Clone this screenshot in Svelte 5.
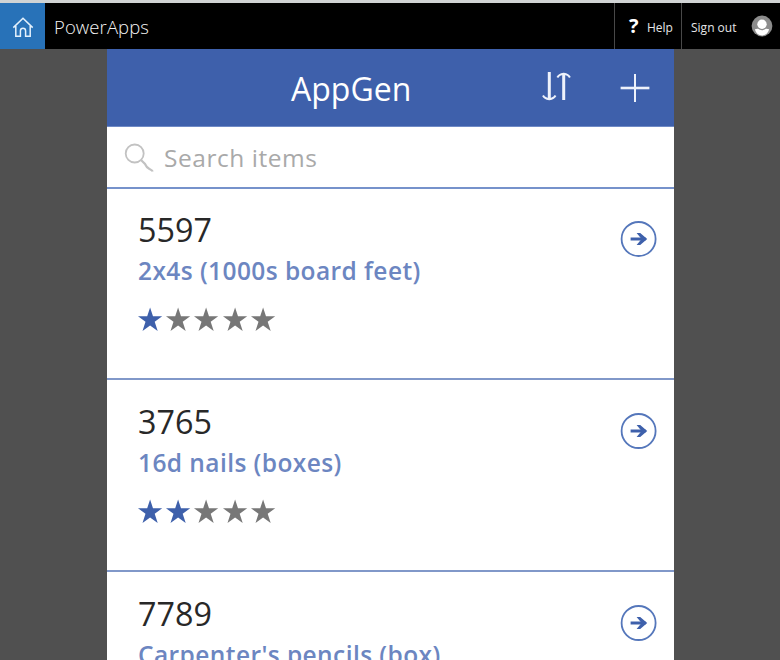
<script>
  const items = [
    { id: '5597', name: '2x4s (1000s board feet)', rating: 1 },
    { id: '3765', name: '16d nails (boxes)', rating: 2 },
    { id: '7789', name: "Carpenter's pencils (box)", rating: 3 }
  ];
  const stars = [1, 2, 3, 4, 5];
</script>

<div class="app">
  <div class="strip"></div>
  <nav>
    <div class="home">
      <svg width="22" height="22" viewBox="0 0 22 22" fill="none" stroke="#e4f1fc" stroke-width="1.5">
        <path d="M1.3 11.6 11 2.2l9.7 9.4M3.8 9.9v10.3h4.6v-5.4a2.6 2.6 0 0 1 5.2 0v5.4h4.6V9.9" />
      </svg>
    </div>
    <span class="brand">PowerApps</span>
    <div class="help"><b>?</b><span>Help</span></div>
    <div class="account">
      <span>Sign out</span>
      <svg width="22" height="22" viewBox="0 0 22 22">
        <circle cx="11" cy="11" r="10.4" fill="#8c8c8c" />
        <circle cx="11" cy="9.2" r="4.7" fill="#fff" />
        <path d="M3.9 14.3c1.2-.5 2.3-.7 3.2-.5 2.3 1.9 5.5 1.9 7.8 0 .9-.2 2 0 3.2.5C17 18.7 14.3 20.4 11 20.4S5 18.7 3.9 14.3z" fill="#fff" />
      </svg>
    </div>
  </nav>

  <main>
    <header>
      <h1>AppGen</h1>
      <svg class="sort" width="30" height="32" viewBox="0 0 30 32" fill="none" stroke="#eef2fb">
        <path d="M8.300 1v27M22.700 29V3.500" stroke-width="3" />
        <path d="M2 24.500q1.500 3 6.300 3.700 4.700-.7 6.200-3.700M16.400 6.500q1.500-3 6.300-3.700 4.700.7 6.200 3.700" stroke-width="2" />
      </svg>
      <svg class="plus" width="30" height="30" viewBox="0 0 30 30" fill="none" stroke="#eef2fb">
        <path d="M15 1v28" stroke-width="2" />
        <path d="M.6 15h28.800" stroke-width="2.600" />
      </svg>
    </header>
    <div class="search">
      <svg width="31" height="31" viewBox="0 0 31 31" fill="none" stroke="#c2c2c2">
        <circle cx="10.700" cy="10.500" r="9" stroke-width="1.800" />
        <path d="m17 17 4 4q1.500 3.500 4.500 5t3.200 2.500" stroke-width="2.200" />
      </svg>
      <span>Search items</span>
    </div>
    {#each items as item}
      <section>
        <div class="info">
          <div class="id">{item.id}</div>
          <div class="name">{item.name}</div>
          <div class="stars">
            {#each stars as s}
              <svg class:on={s <= item.rating} width="28" height="26" viewBox="0 0 28 26">
                <path d="m12 .5 2.900 8.800h9.200l-7.500 5.500 3 9.300L12 18.500l-7.600 5.600 3-9.300L-.1 9.300h9.200z" />
              </svg>
            {/each}
          </div>
        </div>
        <svg class="go" width="38" height="38" viewBox="0 0 38 38" fill="none" stroke="#3e60ab">
          <circle cx="18.600" cy="19" r="17" stroke="#5577bb" stroke-width="1.800" />
          <path d="M10.600 19h15" stroke-width="3" />
          <path d="m16.600 13h3.600l7 6-7 6h-3.600l5-6z" fill="#3e60ab" stroke="none" />
        </svg>
      </section>
    {/each}
  </main>
</div>

<style>
  :global(body) { margin: 0; overflow: hidden; }
  .app {
    width: 780px; height: 660px; overflow: hidden; background: #505050;
    font-family: "Open Sans", "Noto Sans", sans-serif;
    display: flex; flex-direction: column;
  }
  .strip { height: 3px; background: #d0d3d4; flex: none; }
  nav { height: 46px; flex: none; background: #000; display: flex; align-items: stretch; color: #e6e6e6; }
  .home { width: 45px; display: flex; align-items: center; justify-content: center; background: #2872b8; }
  .home svg { margin-top: 2px; }
  .brand { flex: 1; padding-left: 9px; line-height: 48px; font-size: 18.500px; font-weight: 300; letter-spacing: .1px; color: #f4f4f4; }
  .help, .account { box-sizing: border-box; border-left: 1px solid #484848; display: flex; align-items: center; font-size: 12px; white-space: nowrap; }
  .help span, .account span { padding-top: 3px; }
  .help { width: 67px; padding-left: 14px; }
  .help b { width: 18px; font-size: 20px; line-height: 24px; color: #fff; }
  .account { width: 99px; padding-left: 9px; justify-content: space-between; padding-right: 7px; }
  main { width: 567px; flex: 1; min-height: 0; overflow: hidden; margin-left: 107px; background: #fff; }
  header { box-sizing: border-box; height: 78px; background: #3e60ab; border-bottom: 1px solid #6f8ac5; color: #fff; display: flex; align-items: center; }
  h1 { margin: 3px 0 0 184px; width: 250px; font-size: 32px; line-height: 76px; font-weight: 400; }
  .sort { margin-top: -2px; }
  .plus { margin: 1px 0 0 49px; }
  .search { height: 60px; border-bottom: 2px solid #7692cb; display: flex; align-items: center; color: #a9a9a9; font-size: 24.500px; letter-spacing: .55px; }
  .search svg { margin: 2px 9px 0 17px; }
  .search span { line-height: 60px; padding-top: 2px; }
  section { height: 190px; border-bottom: 2px solid #8198c9; display: flex; justify-content: space-between; }
  section:nth-of-type(1) { height: 189px; }
  .info { padding: 21px 0 0 31px; }
  .go { margin: 32px 16px 0 0; flex: none; }
  section:nth-of-type(1) .info { padding-top: 20px; }
  section:nth-of-type(1) .go { margin-top: 31px; }
  .id { font-size: 32.300px; line-height: 40px; color: #282828; }
  .name { font-size: 24.500px; letter-spacing: .42px; line-height: 36px; margin-top: 4px; font-weight: 600; color: #6c86c1; white-space: nowrap; }
  .stars { display: flex; margin-top: 18px; }
  .stars svg { fill: #777; width: 28.200px; overflow: visible; }
  .stars svg.on { fill: #3e60ab; }
</style>
